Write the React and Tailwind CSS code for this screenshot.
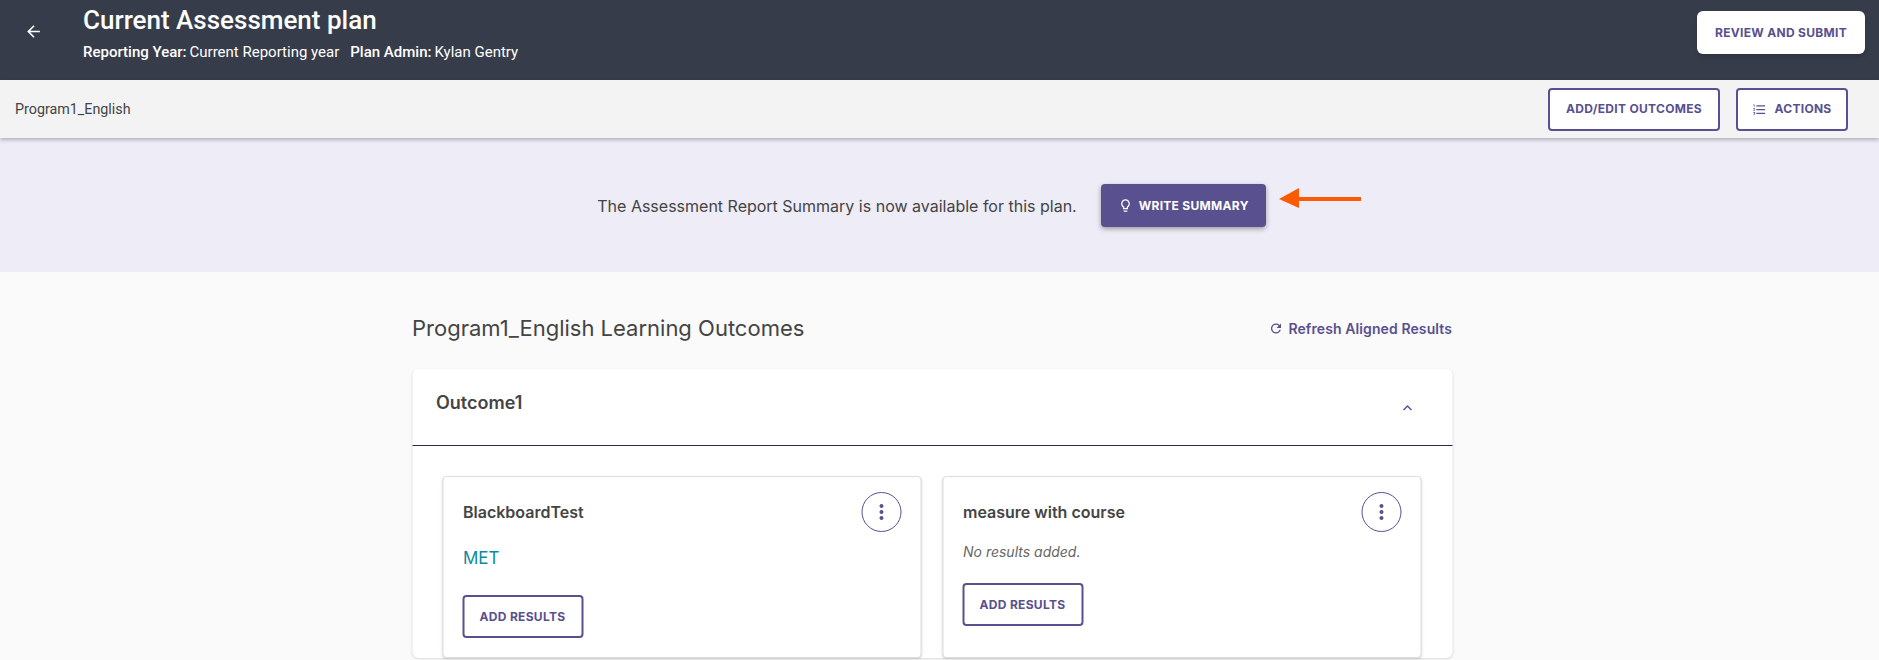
import { MdArrowBack, MdFormatListNumbered, MdOutlineLightbulb, MdRefresh, MdKeyboardArrowUp, MdMoreVert } from "react-icons/md";

function OutlineButton({ children, className = "" }) {
    return (
        <button
            type="button"
            className={`flex h-[43px] items-center justify-center gap-[7px] rounded-[4px] border-2 border-[#59508f] bg-white text-[12px] font-bold tracking-[0.3px] text-[#59508f] ${className}`}
        >
            {children}
        </button>
    );
}

function MeasureCard({ title, children }) {
    return (
        <div className="h-[182px] w-[479px] rounded-[4px] border border-[#dddddd] bg-white pl-[19px] pr-[19px] pt-[15px] shadow-sm">
            <div className="flex h-[40px] items-center justify-between">
                <h3 className="pl-[1px] text-[16px] font-semibold text-[#444444]">{title}</h3>
                <button
                    type="button"
                    className="flex h-[40px] w-[40px] items-center justify-center rounded-full border border-[#59508f] text-[#59508f]"
                >
                    <MdMoreVert size={24} />
                </button>
            </div>
            {children}
        </div>
    );
}

export default function App() {
    return (
        <div className="h-[660px] overflow-hidden bg-[#fafafa] font-['Inter',sans-serif] text-[#444444]">
            <header className="flex h-[80px] items-start justify-between bg-[#373c4a] pl-[24px] pr-[14px] text-white">
                <div className="flex">
                    <MdArrowBack size={19} className="mt-[22px]" />
                    <div className="ml-[40px] font-['Roboto',sans-serif]">
                        <h1 className="mt-[4px] text-[26px] leading-[32px] font-medium">Current Assessment plan</h1>
                        <div className="mt-[6px] flex text-[15px] leading-[20px]">
                            <span className="font-medium">Reporting Year:</span>
                            <span className="ml-[3px]">Current Reporting year</span>
                            <span className="ml-[11px] font-medium">Plan Admin:</span>
                            <span className="ml-[3px]">Kylan Gentry</span>
                        </div>
                    </div>
                </div>
                <button
                    type="button"
                    className="mt-[11px] h-[43px] w-[168px] rounded-[6px] bg-white text-[12px] font-bold tracking-[0.3px] text-[#59508f] shadow-md"
                >
                    REVIEW AND SUBMIT
                </button>
            </header>

            <div className="relative z-10 flex h-[58px] items-center justify-between bg-[#f3f3f3] pl-[15px] pr-[31px] shadow-[0_2px_4px_rgba(0,0,0,0.25)]">
                <span className="pt-[1px] font-['Roboto',sans-serif] text-[14.3px] text-[#444444]">Program1_English</span>
                <div className="flex gap-[16px]">
                    <OutlineButton className="w-[172px]">ADD/EDIT OUTCOMES</OutlineButton>
                    <OutlineButton className="w-[112px]">
                        <MdFormatListNumbered size={15} />
                        ACTIONS
                    </OutlineButton>
                </div>
            </div>

            <section className="relative flex h-[134px] items-center justify-center gap-[24px] bg-[#eeecf6] pr-[16px] pt-[1px]">
                <p className="text-[16px] text-[#444444]">The Assessment Report Summary is now available for this plan.</p>
                <button
                    type="button"
                    className="flex h-[43px] w-[165px] items-center justify-center gap-[6px] rounded-[4px] bg-[#59508f] text-[12px] font-bold tracking-[0.3px] text-white shadow-[0_2px_5px_rgba(0,0,0,0.35)]"
                >
                    <MdOutlineLightbulb size={15} />
                    WRITE SUMMARY
                </button>
                <svg className="absolute left-[1279px] top-[50px]" width="83" height="22" viewBox="0 0 83 22">
                    <path d="M20 0 L0 11 L20 20 Z" fill="#fc5a03" />
                    <rect x="19" y="9" width="63" height="4" fill="#fc5a03" />
                </svg>
            </section>

            <main className="mx-auto w-[1040px] -translate-x-[7.5px]">
                <div className="flex h-[97px] items-center justify-between pt-[15px]">
                    <h2 className="text-[22px] text-[#444444]">Program1_English Learning Outcomes</h2>
                    <button type="button" className="flex items-center gap-[5px] text-[14px] font-semibold tracking-[0.1px] text-[#59508f]">
                        <MdRefresh size={15} />
                        Refresh Aligned Results
                    </button>
                </div>
                <div className="rounded-[6px] bg-white shadow-sm">
                    <div className="flex h-[77px] items-start justify-between border-b border-[#2f2a4d] pl-[24px] pr-[36px]">
                        <h3 className="mt-[20px] text-[18px] font-semibold text-[#444444]">Outcome1</h3>
                        <MdKeyboardArrowUp size={18} className="mt-[30px] text-[#59508f]" />
                    </div>
                    <div className="flex gap-[21px] pl-[30px] pt-[30px]">
                        <MeasureCard title="BlackboardTest">
                            <p className="mt-[14px] pl-[1px] text-[17px] leading-[24px] text-[#0e8a9c]">MET</p>
                            <OutlineButton className="mt-[25px] w-[121px]">ADD RESULTS</OutlineButton>
                        </MeasureCard>
                        <MeasureCard title="measure with course">
                            <p className="mt-[9px] pl-[1px] text-[14px] italic text-[#666666]">No results added.</p>
                            <OutlineButton className="mt-[21px] w-[121px]">ADD RESULTS</OutlineButton>
                        </MeasureCard>
                    </div>
                </div>
            </main>
        </div>
    );
}
